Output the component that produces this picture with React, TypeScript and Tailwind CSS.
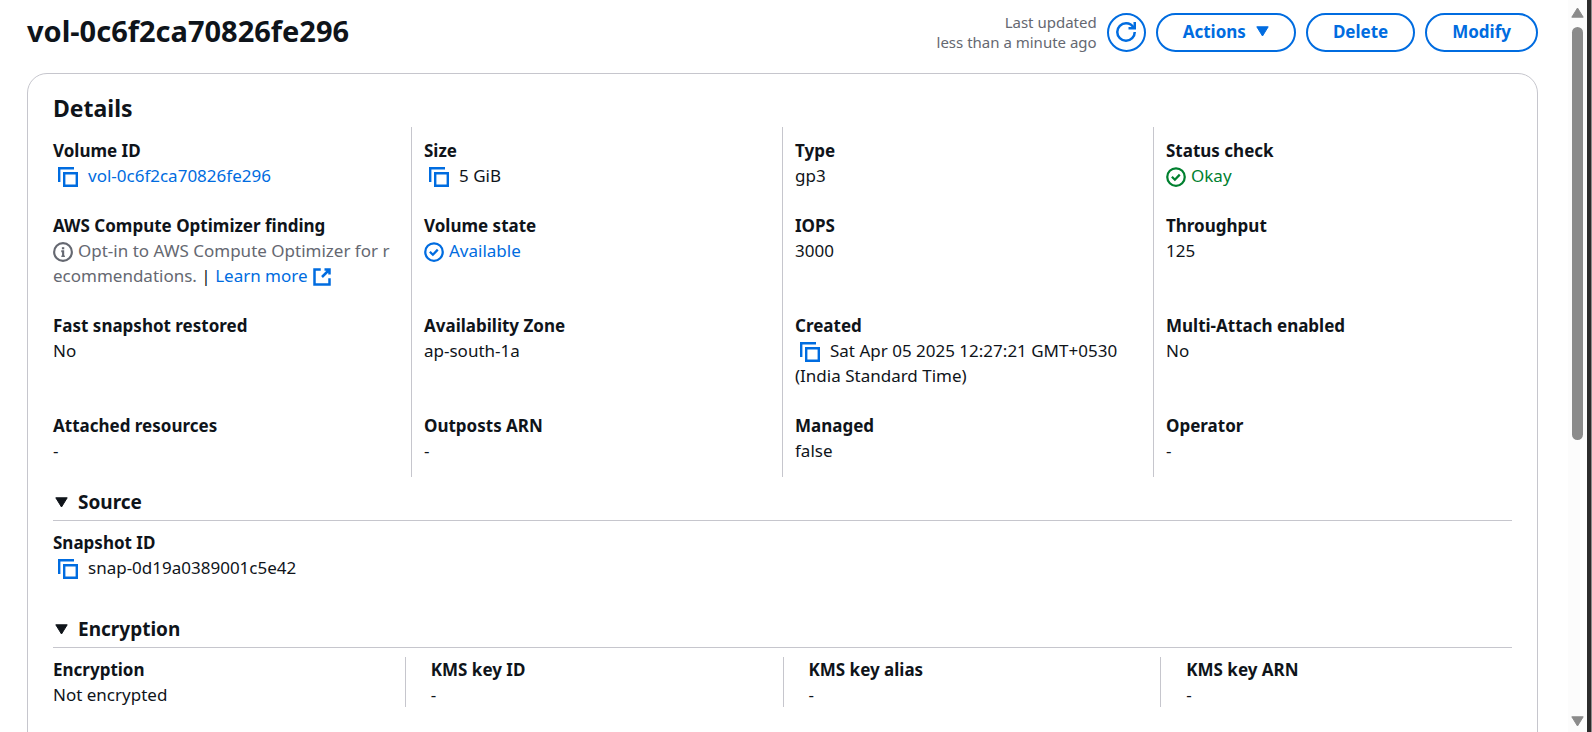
import React, { useState } from "react";

function CopyIcon() {
  return (
    <svg viewBox="0 0 20 20" className="h-5 w-5" fill="none" stroke="currentColor" strokeWidth="2.4" aria-hidden="true">
      <path d="M1.2 15V1.2H16" />
      <path d="M6.2 6.2h12.6v12.6H6.2z" />
    </svg>
  );
}

function CheckIcon() {
  return (
    <svg viewBox="0 0 16 16" className="mr-[5px] inline-block h-5 w-5 align-[-5px]" fill="none" stroke="currentColor" strokeWidth="1.8" aria-hidden="true">
      <circle cx="8" cy="8" r="7" />
      <path d="M4.7 7.8l2.4 2.4 3.9-4.1" />
    </svg>
  );
}

function InfoIcon() {
  return (
    <svg viewBox="0 0 16 16" className="mr-[5px] inline-block h-5 w-5 align-[-5px]" fill="none" stroke="currentColor" strokeWidth="1.7" aria-hidden="true">
      <circle cx="8" cy="8" r="7.1" />
      <path d="M6.6 7.4H8.1v4.4" />
      <path d="M6.6 11.4h3" strokeWidth="1" />
      <path d="M7.1 5h1.9" />
    </svg>
  );
}

function ExternalIcon() {
  return (
    <svg viewBox="0 0 16 16" className="ml-1 inline-block h-5 w-5 align-[-5px]" fill="none" stroke="currentColor" strokeWidth="2" aria-hidden="true">
      <path d="M10 2h4v4M8 8l6-6" />
      <path d="M14 9v5H2V2h5" />
    </svg>
  );
}

function RefreshIcon() {
  return (
    <svg viewBox="0 0 16 16" className="h-5 w-5 overflow-visible" fill="none" stroke="currentColor" strokeWidth="2" aria-hidden="true">
      <path d="M15 8c0 3.87-3.13 7-7 7s-7-3.13-7-7 3.13-7 7-7c2.79 0 5.2 1.63 6.33 4" />
      <path d="M10 5h5V0" />
    </svg>
  );
}

function Caret() {
  return (
    <svg viewBox="0 0 13 11" className="h-[11px] w-[13px]" fill="currentColor" stroke="currentColor" strokeLinejoin="round" aria-hidden="true">
      <path d="M.8.8h11.4L6.5 10z" />
    </svg>
  );
}

function CopyButton({ label }: { label: string }) {
  return (
    <button type="button" aria-label={label} className="mr-[10px] ml-[5px] inline-block align-[-5px] text-[#006ce0]">
      <CopyIcon />
    </button>
  );
}

const LINK = "text-[#006ce0]";
const BUTTON =
  "flex h-[39px] items-center rounded-full border-2 border-[#006ce0] px-[25px] pb-0.5 font-bold text-[#006ce0]";

function Field({ label, children }: { label: string; children: React.ReactNode }) {
  return (
    <>
      <dt className="font-bold">{label}</dt>
      <dd>{children}</dd>
    </>
  );
}

const DETAILS: { label: string; value: React.ReactNode }[] = [
  {
    label: "Volume ID",
    value: (
      <>
        <CopyButton label="Copy volume ID" />
        <a href="#volume" className={LINK}>vol-0c6f2ca70826fe296</a>
      </>
    ),
  },
  { label: "Size", value: <><CopyButton label="Copy size" />5 GiB</> },
  { label: "Type", value: "gp3" },
  { label: "Status check", value: <span className="text-[#00802f]"><CheckIcon />Okay</span> },
  {
    label: "AWS Compute Optimizer finding",
    value: (
      <div className="pr-2 break-all">
        <span className="text-[#656871]">
          <InfoIcon />Opt-in to AWS Compute Optimizer for recommendations.
        </span>{" "}
        | <a href="#optimizer" className={LINK}>Learn more<ExternalIcon /></a>
      </div>
    ),
  },
  { label: "Volume state", value: <span className={LINK}><CheckIcon />Available</span> },
  { label: "IOPS", value: "3000" },
  { label: "Throughput", value: "125" },
  { label: "Fast snapshot restored", value: "No" },
  { label: "Availability Zone", value: "ap-south-1a" },
  {
    label: "Created",
    value: <><CopyButton label="Copy created date" />Sat Apr 05 2025 12:27:21 GMT+0530 (India Standard Time)</>,
  },
  { label: "Multi-Attach enabled", value: "No" },
  { label: "Attached resources", value: "-" },
  { label: "Outposts ARN", value: "-" },
  { label: "Managed", value: "false" },
  { label: "Operator", value: "-" },
];

const ENCRYPTION = [
  { label: "Encryption", value: "Not encrypted" },
  { label: "KMS key ID", value: "-" },
  { label: "KMS key alias", value: "-" },
  { label: "KMS key ARN", value: "-" },
];

function Section({ title, className, children }: { title: string; className: string; children: React.ReactNode }) {
  const [open, setOpen] = useState(true);
  return (
    <section className={className}>
      <h3 className="border-b border-[#c6c6cd] pb-1.5">
        <button
          type="button"
          aria-expanded={open}
          onClick={() => setOpen(!open)}
          className="flex items-center gap-[10px] pl-0.5 text-[19px] leading-6 font-bold"
        >
          <Caret />
          {title}
        </button>
      </h3>
      {open && children}
    </section>
  );
}

export default function App() {
  return (
    <div className="flex h-screen overflow-hidden bg-white font-['Noto_Sans','Open_Sans',sans-serif] text-[17px] leading-[25px] text-[#0f141a]">
      <main className="min-w-0 flex-1 pr-[30px] pl-[27px]">
        <header className="flex items-start justify-between pt-3">
          <h1 className="text-[29px] leading-[38px] font-bold">vol-0c6f2ca70826fe296</h1>
          <div className="flex items-center gap-[10px]">
            <p className="text-right text-[15px] leading-5 text-[#656871]">
              Last updated
              <br />
              less than a minute ago
            </p>
            <button
              type="button"
              aria-label="Refresh"
              className="flex h-[39px] w-[39px] items-center justify-center rounded-full border-2 border-[#006ce0] text-[#006ce0]"
            >
              <RefreshIcon />
            </button>
            <button type="button" className={BUTTON + " gap-[10px]"}>
              Actions
              <Caret />
            </button>
            <button type="button" className={BUTTON}>Delete</button>
            <button type="button" className={BUTTON}>Modify</button>
          </div>
        </header>

        <article className="mt-[21px] rounded-[20px] border border-[#c6c6cd] px-[25px] pt-[19px] pb-12">
          <h2 className="text-[23px] leading-[30px] font-bold">Details</h2>

          <dl className="-mr-3 -ml-[13px] mt-1 grid grid-cols-4">
            {DETAILS.map((item) => (
              <div
                key={item.label}
                className="border-l border-[#c6c6cd] px-3 pt-[11px] pb-[14px] nth-[4n+1]:border-transparent"
              >
                <Field label={item.label}>{item.value}</Field>
              </div>
            ))}
          </dl>

          <Section title="Source" className="mt-[13px]">
            <dl className="mt-[9px]">
              <Field label="Snapshot ID">
                <CopyButton label="Copy snapshot ID" />
                snap-0d19a0389001c5e42
              </Field>
            </dl>
          </Section>

          <Section title="Encryption" className="mt-[37px]">
            <dl className="-mx-[26px] mt-[9px] grid grid-cols-4">
              {ENCRYPTION.map((item) => (
                <div key={item.label} className="border-l border-[#c6c6cd] px-[25px] first:border-transparent">
                  <Field label={item.label}>{item.value}</Field>
                </div>
              ))}
            </dl>
          </Section>
        </article>
      </main>

      <div aria-hidden="true" className="flex w-[19px] flex-col items-center bg-[#fcfcfc] pt-[7px] pb-[5px] text-[#8b8b8b]">
        <div className="flex h-[11px] rotate-180">
          <Caret />
        </div>
        <div className="mt-[9px] flex w-[11px] flex-1 flex-col">
          <div className="h-[60%] rounded-full bg-[#8b8b8b]" />
        </div>
        <Caret />
      </div>
      <div className="w-1 bg-[#2b2b2b]" />
      <div className="w-px bg-[#8b8b8b]" />
    </div>
  );
}
